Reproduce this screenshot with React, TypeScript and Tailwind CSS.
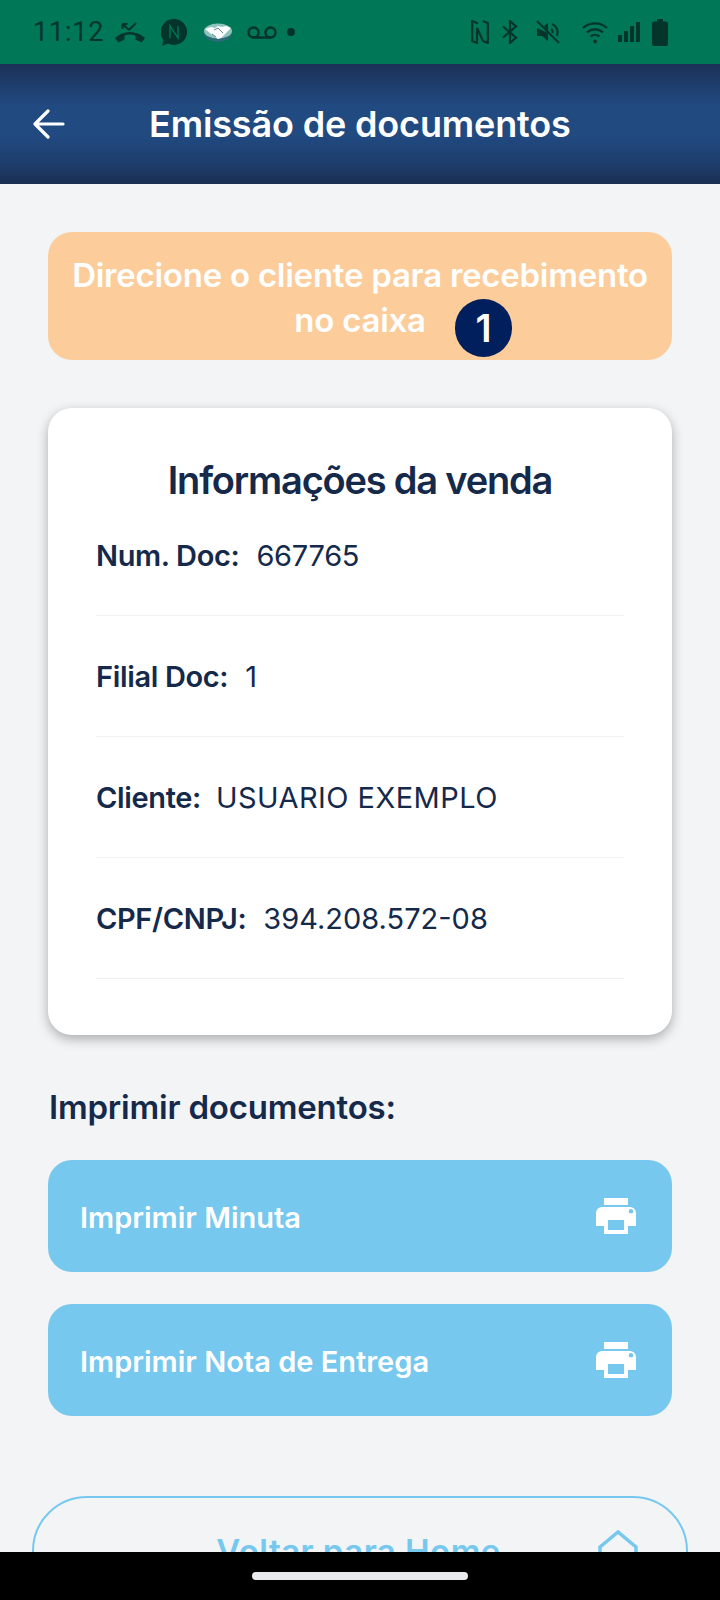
import React from "react";

const font = { fontFamily: '"Inter", "Noto Sans", sans-serif' };

function Row({ label, value, gap, track }: { label: string; value: string; gap: string; track: string }) {
  return (
    <div className="h-[121px] mx-[48px] border-b border-[#eff1f3] flex items-center pt-[2px] text-[#15294b] text-[29px] leading-[36px]">
      <span className="font-semibold tracking-[-0.35px]">{label}</span>
      <span className={`${gap} ${track}`}>{value}</span>
    </div>
  );
}

function Printer() {
  return (
    <svg width="40" height="36" viewBox="0 0 40 36" fill="#fff">
      <path d="M8 0h24v7H8z" />
      <path fillRule="evenodd" d="M6 9h28a6 6 0 0 1 6 6v13h-8v8H8v-8H0V15a6 6 0 0 1 6-6zm6 13v10h16V22H12zm23-11a2.300 2.300 0 1 0 0 4.600 2.300 2.300 0 0 0 0-4.600z" />
    </svg>
  );
}

function PrintButton({ label }: { label: string }) {
  return (
    <div className="h-[112px] rounded-[24px] bg-[#77c8ee] flex items-center justify-between pl-[32px] pr-[36px]">
      <span className="text-white text-[29px] font-semibold tracking-[0px] pt-[3px]">{label}</span>
      <Printer />
    </div>
  );
}

export default function App() {
  return (
    <div className="w-[720px] h-[1600px] flex flex-col overflow-hidden bg-[#f2f4f6]" style={font}>
      <div className="h-[64px] shrink-0 bg-[#007858] flex items-center justify-between pl-[33px] pr-[52px] text-[#03352a]">
        <div className="flex items-center">
          <span className="text-[27px] tracking-[0.8px] mr-[11px]" style={{ fontFamily: "Roboto, sans-serif" }}>11:12</span>
          <svg width="30" height="22" viewBox="0 0 30 22" className="mr-[16px]" fill="currentColor">
            <path d="M0 17c8-8 22-8 30 0l-3.500 4.500-6-3v-4c-3.500-1.200-7.500-1.200-11 0v4l-6 3z" />
            <path d="M14 9L7.500 3M7.500 3v5M7.500 3h5M14 9l7-7" stroke="currentColor" strokeWidth="2" fill="none" />
          </svg>
          <svg width="26" height="27" viewBox="0 0 26 27" className="mr-[17px]">
            <path d="M13 0a13 13 0 1 1-6 24.500L1 27l1.500-6A13 13 0 0 1 13 0z" fill="#03352a" />
            <path d="M9 19V7l8 12V7" stroke="#007858" strokeWidth="1.300" fill="none" />
          </svg>
          <svg width="28" height="19" viewBox="0 0 28 19" className="mr-[15px]">
            <ellipse cx="14" cy="10" rx="14" ry="9" fill="#2c6a77" />
            <ellipse cx="14" cy="8" rx="14" ry="7.500" fill="#8fc4bd" />
            <path d="M1 6l6-2 4 1 3-2 4 1 4-1 5 2-4 4-6 6-3 1-8-6z" fill="#fff" />
            <path d="M10 7l4-2 5 5M8 11l4 3" stroke="#2c6a77" strokeWidth="0.800" fill="none" />
          </svg>
          <svg width="30" height="13" viewBox="0 0 30 13" className="mr-[10px]" fill="none" stroke="currentColor" strokeWidth="2.500">
            <circle cx="6.500" cy="6.500" r="5" />
            <circle cx="23.500" cy="6.500" r="5" />
            <path d="M6.500 11.500h17" />
          </svg>
          <span className="w-[8px] h-[8px] rounded-full bg-[#03352a]" />
        </div>
        <div className="flex items-center">
          <svg width="18" height="24" viewBox="0 0 18 24" className="mr-[13px]" fill="none" stroke="currentColor" strokeWidth="2.200">
            <path d="M7 3.500L1.200 1v20l4.800 2V8l6 13 4.800 2V3l-5-2" />
          </svg>
          <svg width="16" height="24" viewBox="0 0 16 24" className="mr-[18px]" fill="none" stroke="currentColor" strokeWidth="2.200">
            <path d="M1 6.500l13 11L8 23V1l6 5.500-13 11" />
          </svg>
          <svg width="24" height="24" viewBox="0 0 24 24" className="mr-[22px]" fill="none" stroke="currentColor" strokeWidth="2.200">
            <path d="M1 1l22 22" />
            <path d="M1 8v8h5l6 5v-8zM8 6l4-3v8z" fill="currentColor" stroke="none" />
            <path d="M16 4a9 9 0 0 1 5 12M15 9a4 4 0 0 1 1.500 4" />
          </svg>
          <svg width="26" height="23" viewBox="0 0 26 23" className="mr-[10px]" fill="none" stroke="currentColor" strokeWidth="2.300">
            <path d="M1 7a18 18 0 0 1 24 0M5 11.500a12 12 0 0 1 16 0M8.500 15.500a7 7 0 0 1 9 0" />
            <circle cx="13" cy="20.500" r="2" fill="currentColor" stroke="none" />
          </svg>
          <svg width="22" height="20" viewBox="0 0 22 20" className="mr-[12px]" fill="currentColor">
            <rect x="0" y="13" width="4" height="7" />
            <rect x="6" y="9" width="4" height="11" />
            <rect x="12" y="4" width="4" height="16" />
            <rect x="18" y="0" width="4" height="20" />
          </svg>
          <svg width="16" height="27" viewBox="0 0 16 27" fill="#03352a">
            <path d="M5 0h6v2.500h3a2 2 0 0 1 2 2V25a2 2 0 0 1-2 2H2a2 2 0 0 1-2-2V4.500a2 2 0 0 1 2-2h3z" />
          </svg>
        </div>
      </div>

      <div className="h-[120px] shrink-0 flex items-center bg-[linear-gradient(180deg,#1b3157_0%,#214a81_35%,#214a81_60%,#1d3c6a_85%,#1b2e50_100%)]">
        <svg width="32" height="30" viewBox="0 0 32 30" className="ml-[33px]" fill="none" stroke="#fff" strokeWidth="3.200" strokeLinecap="round" strokeLinejoin="round">
          <path d="M30 15H2M15 2L2 15l13 13" />
        </svg>
        <h1 className="ml-[84px] text-white text-[36px] font-semibold tracking-[-0.15px] leading-none">Emissão de documentos</h1>
      </div>

      <main className="flex-1 overflow-hidden px-[48px] pt-[48px]">
        <div className="relative h-[128px] rounded-[24px] bg-[#fdcc9b] text-white text-[33px] font-semibold leading-[45px] text-center pt-[21px] tracking-[-0.25px]">
          <div className="whitespace-nowrap">Direcione o cliente para recebimento</div>
          <div>no caixa</div>
          <span className="absolute left-[407px] top-[67px] w-[57px] h-[58px] rounded-full bg-[#001f5c] flex items-center justify-center text-[38px] leading-none">1</span>
        </div>

        <section className="mt-[48px] h-[627px] rounded-[24px] bg-white shadow-[0_4px_12px_rgba(0,0,0,0.3)] pt-[48px]">
          <h2 className="text-center text-[#15294b] text-[38px] h-[39px] leading-[48px] font-semibold tracking-[-1.2px]">Informações da venda</h2>
          <Row label="Num. Doc:" value="667765" gap="ml-[17px]" track="tracking-[-0.3px]" />
          <Row label="Filial Doc:" value="1" gap="ml-[17px]" track="tracking-[0px]" />
          <Row label="Cliente:" value="USUARIO EXEMPLO" gap="ml-[15px]" track="tracking-[0.45px]" />
          <Row label="CPF/CNPJ:" value="394.208.572-08" gap="ml-[17px]" track="tracking-[0px]" />
        </section>

        <h3 className="mt-[50px] text-[#15294b] text-[33px] leading-[44px] font-semibold ml-[1px] tracking-[-0.2px]">Imprimir documentos:</h3>

        <div className="mt-[31px] flex flex-col gap-[32px]">
          <PrintButton label="Imprimir Minuta" />
          <PrintButton label="Imprimir Nota de Entrega" />
        </div>

        <div className="-mx-[16px] mt-[80px] h-[111px] rounded-[55px] border-2 border-[#77c8ee] relative flex justify-center pt-[31px]">
          <span className="text-[#77c8ee] text-[33px] font-semibold leading-[44px] pr-[3px] tracking-[0.45px]">Voltar para Home</span>
          <svg width="40" height="44" viewBox="0 0 40 44" className="absolute right-[48px] top-[32px]" fill="none" stroke="#77c8ee" strokeWidth="3.500">
            <path d="M2 17L20 2l18 15v25H2z" />
            <path d="M13 29h14" />
          </svg>
        </div>
      </main>

      <div className="h-[48px] shrink-0 bg-black flex justify-center pt-[20px]">
        <span className="w-[216px] h-[8px] rounded-full bg-[#e9ebee]" />
      </div>
    </div>
  );
}
